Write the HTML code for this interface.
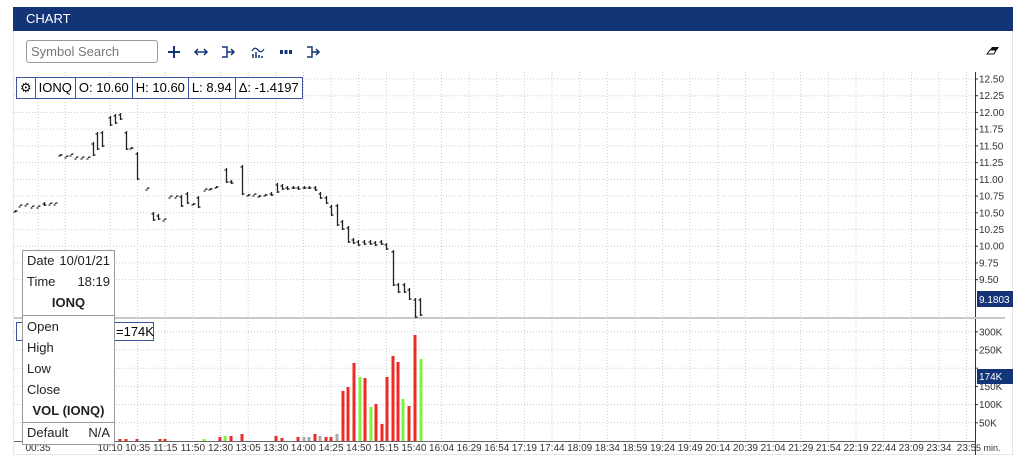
<!DOCTYPE html>
<html><head><meta charset="utf-8"><style>
body{margin:0;width:1024px;height:468px;background:#fff;font-family:"Liberation Sans",Arial,sans-serif;position:relative;overflow:hidden}
.hdr{position:absolute;left:13px;top:7px;width:1000px;height:24px;background:#133577;color:#fff;font-size:13px;line-height:24px;padding-left:13px;box-sizing:border-box;font-weight:500}
.panel{position:absolute;left:13px;top:31px;width:1000px;height:424px;border:1px solid #e6e6e6;border-top:none;box-sizing:border-box}
.search{position:absolute;left:26px;top:40px;width:132px;height:23px;border:1px solid #999;border-radius:3px;box-sizing:border-box;font-size:13px;color:#777;padding:3px 0 0 4px}
.info{position:absolute;left:16px;top:77px;height:20px;border:1px solid #3b55a0;display:flex;font-size:13px;background:#fff}
.info div{border-right:1px solid #3b55a0;padding:0 3px;line-height:19px}
.info div:last-child{border-right:none}
.tip{position:absolute;left:22px;top:250px;width:93px;height:195px;border:1px solid #999;background:#fff;font-size:13px;color:#222;box-sizing:border-box}
.tip .r{display:flex;justify-content:space-between;padding:0 4px}
.vol{position:absolute;left:16px;top:322px;width:138px;height:19px;border:1px solid #3b55a0;font-size:13px;box-sizing:border-box;line-height:18px;padding-left:99px;background:#fff}
</style></head><body>
<div class="hdr">CHART</div>
<div class="panel"></div>
<div class="search">Symbol Search</div>
<svg style="position:absolute;left:160px;top:40px" width="170" height="24" fill="none" stroke="#133577" stroke-width="2">
<path d="M8 12H20M14 6V18"/>
<path d="M35 12H47" stroke-width="1.5"/><path d="M38 9L35 12L38 15M44 9L47 12L44 15" stroke-width="1.5"/>
<path d="M62 7H67V17H62M67 12H74M71 9L74 12L71 15" stroke-width="1.5"/>
<path d="M93 14V18M96 12V18M99 15V18M102 16V18" stroke-width="1.5"/><path d="M92 11Q95 6 98 10T104 9" stroke-width="1.2"/>
<rect x="120" y="10" width="3" height="4" fill="#133577" stroke="none"/><rect x="124.5" y="10" width="3" height="4" fill="#133577" stroke="none"/><rect x="129" y="10" width="3" height="4" fill="#133577" stroke="none"/>
<path d="M147 7H152V17H147M152 12H159M156 9L159 12L156 15" stroke-width="1.5"/>
</svg>
<svg style="position:absolute;left:985px;top:44px" width="16" height="12"><path d="M2 10 L7 3 H14 L9 10 Z" fill="#111"/><path d="M2 10 L5 6 H11 L9 10Z" fill="#fff" stroke="#111" stroke-width="1"/></svg>
<svg style="position:absolute;left:0;top:0" width="1024" height="468" id="c">
<g stroke="#ccc" stroke-dasharray="1,2" stroke-width="1" id="grid"></g>
<line x1="975.5" y1="72" x2="975.5" y2="455" stroke="#333"/>
<line x1="14" y1="318" x2="1005" y2="318" stroke="#c8c8c8" stroke-width="2"/>
<line x1="14" y1="441.5" x2="975" y2="441.5" stroke="#666"/>
<g id="bars" stroke="#222" stroke-width="1.3" fill="none"></g>
<g id="vb"></g>
<g font-size="10" fill="#333" id="lab"></g>
<rect x="977" y="291" width="36" height="16" fill="#133577"/><text x="979" y="303" font-size="10" fill="#fff">9.1803</text>
<rect x="977" y="369" width="36" height="15" fill="#133577"/><text x="979" y="380" font-size="10" fill="#fff">174K</text>
</svg>
<div class="info"><div>⚙</div><div>IONQ</div><div>O: 10.60</div><div>H: 10.60</div><div>L: 8.94</div><div>Δ: -1.4197</div></div>
<div class="vol">=174K</div>
<div class="tip">
<div class="r" style="line-height:20px"><span>Date</span><span>10/01/21</span></div>
<div class="r" style="line-height:22px"><span>Time</span><span>18:19</span></div>
<div style="text-align:center;font-weight:bold;line-height:20px">IONQ</div>
<div style="border-top:1px solid #999;margin-top:2px"></div>
<div class="r" style="line-height:21px">Open</div>
<div class="r" style="line-height:21px">High</div>
<div class="r" style="line-height:21px">Low</div>
<div class="r" style="line-height:21px">Close</div>
<div style="text-align:center;font-weight:bold;line-height:21px">VOL (IONQ)</div>
<div style="border-top:1px solid #999;margin-top:1px"></div>
<div class="r" style="line-height:20px"><span>Default</span><span>N/A</span></div>
</div>
<script>
var NS="http://www.w3.org/2000/svg";
function el(p,t,a,tx){var e=document.createElementNS(NS,t);for(var k in a)e.setAttribute(k,a[k]);if(tx)e.textContent=tx;document.getElementById(p).appendChild(e);}
for(var i=0;i<=12;i++){var y=79+i*16.72;el('grid','line',{x1:14,x2:975,y1:y,y2:y});el('lab','text',{x:979,y:y+3.5},(12.5-i*0.25).toFixed(2));el('lab','line',{x1:975,x2:978,y1:y,y2:y,stroke:'#333'});}
for(var i=1;i<=6;i++){var y=441-i*18.2;el('grid','line',{x1:14,x2:975,y1:y,y2:y});if(i!=4)el('lab','text',{x:979,y:y+3.5},(i*50)+'K');el('lab','line',{x1:975,x2:978,y1:y,y2:y,stroke:'#333'});}
var L=["00:35","","10:10","10:35","11:15","11:50","12:30","13:05","13:30","14:00","14:25","14:50","15:15","15:40","16:04","16:29","16:54","17:19","17:44","18:09","18:34","18:59","19:24","19:49","20:14","20:39","21:04","21:29","21:54","22:19","22:44","23:09","23:34","23:5"];
var xs=[38,65];for(var i=2;i<L.length;i++)xs.push(110+(i-2)*27.63);
for(var i=0;i<L.length;i++){el('grid','line',{x1:xs[i],x2:xs[i],y1:72,y2:441});if(L[i])el('lab','text',{x:xs[i],y:451,'text-anchor':'middle'},L[i]);}
el('lab','text',{x:976,y:451,'font-size':9},'5 min.');
var B=[[15,210,212],[20,205,206],[26,204,205],[32,206,207],[38,206,207],[44,202,206],[50,203,204],[55,203,204],[60,154,156],[66,156,157],[71,154,155],[76,157,158],[82,157,158],[88,157,158],[93,142,156],[97,132,150],[102,131,147],[110,116,126],[115,114,124],[120,113,120],[126,131,150],[131,147,149],[137,152,180],[147,188,189],[153,212,221],[158,214,220],[164,219,220],[170,196,197],[176,196,197],[181,195,207],[187,192,204],[193,203,205],[198,196,208],[205,189,190],[210,188,190],[216,186,188],[226,168,183],[231,180,184],[242,165,195],[248,194,196],[254,194,195],[259,195,197],[265,194,196],[271,192,196],[277,183,193],[282,184,190],[287,186,190],[293,186,189],[298,186,190],[304,186,189],[309,186,189],[315,186,191],[320,192,199],[326,196,204],[331,205,216],[337,204,226],[342,220,230],[348,226,243],[353,238,244],[358,240,246],[364,240,245],[370,240,245],[375,241,246],[381,240,245],[386,243,250],[393,250,286],[398,283,293],[404,283,293],[409,288,300],[415,298,318],[420,298,316]];
B.forEach(function(b){var x=b[0]+0.5;el('bars','path',{d:'M'+x+' '+b[1]+'V'+b[2]+'M'+(x-2)+' '+(b[1]+2)+'H'+x+'M'+x+' '+(b[2]-1)+'H'+(x+2)});});
var V=[[120,439,'r'],[126,439,'r'],[137,439,'r'],[160,439,'r'],[165,439,'r'],[204,439,'g'],[220,437,'r'],[225,436,'g'],[231,436,'r'],[242,434,'r'],[276,436,'r'],[282,438,'r'],[298,437,'r'],[304,437,'#aaa'],[309,437,'#aaa'],[315,434,'r'],[320,436,'#aaa'],[326,437,'r'],[331,437,'r'],[337,434,'#aaa'],[343,391,'r'],[348,387,'r'],[354,363,'r'],[360,377,'g'],[365,378,'r'],[371,407,'g'],[376,404,'r'],[382,424,'r'],[387,377,'r'],[393,356,'r'],[398,362,'r'],[403,399,'g'],[409,406,'r'],[415,335,'r'],[421,359,'g']];
V.forEach(function(v){var c=v[2]=='r'?'#ee2a24':v[2]=='g'?'#7ef33e':v[2];el('vb','rect',{x:v[0]-1.5,y:v[1],width:3,height:441-v[1],fill:c});});
</script>
</body></html>
